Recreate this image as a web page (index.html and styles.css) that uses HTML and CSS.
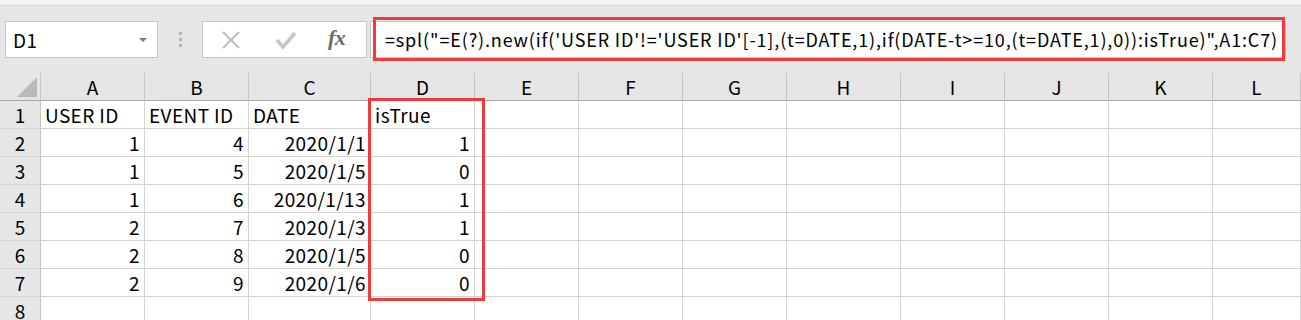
FILE: index.html
```html
<!DOCTYPE html>
<html>
<head>
<meta charset="utf-8">
<link rel="stylesheet" href="styles.css">
</head>
<body>
<div class="app">
  <div class="topstrip"></div>
  <div class="toolbar">
    <div class="namebox"><span>D1</span><span class="caret"></span></div>
    <div class="grip"><i></i><i></i><i></i></div>
    <div class="iconbox">
      <svg class="ico" width="20" height="20" viewBox="0 0 20 20"><path d="M2 2 L18 18 M18 2 L2 18" stroke="#bdbdbd" stroke-width="2" fill="none"/></svg>
      <svg class="ico" width="22" height="20" viewBox="0 0 22 20"><path d="M2 10 L8 17 L20 3" stroke="#c6c6c6" stroke-width="3.6" fill="none"/></svg>
      <span class="fx">fx</span>
    </div>
    <div class="formula">=spl("=E(?).new(if('USER ID'!='USER ID'[-1],(t=DATE,1),if(DATE-t&gt;=10,(t=DATE,1),0)):isTrue)",A1:C7)</div>
    <div class="mark mark-formula"></div>
  </div>
  <div class="sheet">
    <div class="corner"><span class="tri"></span></div>
    <div class="ch">A</div><div class="ch">B</div><div class="ch">C</div><div class="ch">D</div><div class="ch">E</div><div class="ch">F</div><div class="ch">G</div><div class="ch">H</div><div class="ch">I</div><div class="ch">J</div><div class="ch">K</div><div class="ch">L</div>

    <div class="rh">1</div><div class="c">USER ID</div><div class="c">EVENT ID</div><div class="c">DATE</div><div class="c">isTrue</div><div class="c"></div><div class="c"></div><div class="c"></div><div class="c"></div><div class="c"></div><div class="c"></div><div class="c"></div><div class="c"></div>
    <div class="rh">2</div><div class="c n">1</div><div class="c n">4</div><div class="c n">2020/1/1</div><div class="c n">1</div><div class="c"></div><div class="c"></div><div class="c"></div><div class="c"></div><div class="c"></div><div class="c"></div><div class="c"></div><div class="c"></div>
    <div class="rh">3</div><div class="c n">1</div><div class="c n">5</div><div class="c n">2020/1/5</div><div class="c n">0</div><div class="c"></div><div class="c"></div><div class="c"></div><div class="c"></div><div class="c"></div><div class="c"></div><div class="c"></div><div class="c"></div>
    <div class="rh">4</div><div class="c n">1</div><div class="c n">6</div><div class="c n">2020/1/13</div><div class="c n">1</div><div class="c"></div><div class="c"></div><div class="c"></div><div class="c"></div><div class="c"></div><div class="c"></div><div class="c"></div><div class="c"></div>
    <div class="rh">5</div><div class="c n">2</div><div class="c n">7</div><div class="c n">2020/1/3</div><div class="c n">1</div><div class="c"></div><div class="c"></div><div class="c"></div><div class="c"></div><div class="c"></div><div class="c"></div><div class="c"></div><div class="c"></div>
    <div class="rh">6</div><div class="c n">2</div><div class="c n">8</div><div class="c n">2020/1/5</div><div class="c n">0</div><div class="c"></div><div class="c"></div><div class="c"></div><div class="c"></div><div class="c"></div><div class="c"></div><div class="c"></div><div class="c"></div>
    <div class="rh">7</div><div class="c n">2</div><div class="c n">9</div><div class="c n">2020/1/6</div><div class="c n">0</div><div class="c"></div><div class="c"></div><div class="c"></div><div class="c"></div><div class="c"></div><div class="c"></div><div class="c"></div><div class="c"></div>
    <div class="rh">8</div><div class="c"></div><div class="c"></div><div class="c"></div><div class="c"></div><div class="c"></div><div class="c"></div><div class="c"></div><div class="c"></div><div class="c"></div><div class="c"></div><div class="c"></div><div class="c"></div>

    <div class="mark mark-col"></div>
  </div>
</div>
</body>
</html>
```
FILE: styles.css
```css
* { box-sizing: border-box; }
html, body { margin: 0; padding: 0; background: #fff; }
body {
  width: 1301px;
  height: 320px;
  overflow: hidden;
  font-family: "Noto Sans CJK SC", "Noto Sans", sans-serif;
  color: #000;
}
.app { width: 1301px; }

.topstrip {
  height: 6px;
  background: #f3f3f3;
  border-bottom: 1px solid #d6d6d6;
}

.toolbar {
  position: relative;
  height: 67px;
  background: #e6e6e6;
  display: flex;
  align-items: flex-start;
  padding: 15px 0 0 5px;
}

.namebox {
  width: 153px;
  height: 37px;
  background: #fff;
  border: 1px solid #c6c6c6;
  display: flex;
  align-items: center;
  justify-content: space-between;
  padding: 0 10px 0 7px;
  font-size: 19px;
  line-height: 35px;
  letter-spacing: 0.4px;
}
.caret {
  width: 0; height: 0;
  border-left: 4px solid transparent;
  border-right: 4px solid transparent;
  border-top: 4px solid #7a7a7a;
  margin-top: 1px;
}

.grip {
  width: 44px;
  height: 37px;
  display: flex;
  flex-direction: column;
  align-items: center;
  justify-content: center;
  gap: 3px;
}
.grip i {
  display: block;
  width: 3px;
  height: 3px;
  background: #b4b4b4;
}

.iconbox {
  width: 165px;
  height: 37px;
  background: #fff;
  border: 1px solid #c6c6c6;
  display: flex;
  align-items: center;
  padding-left: 18px;
  gap: 34px;
}
.ico { display: block; flex: none; }
.fx {
  font-family: "Liberation Serif", "DejaVu Serif", serif;
  font-style: italic;
  font-weight: bold;
  font-size: 22px;
  color: #6a6a6a;
  margin-left: -3px;
  letter-spacing: -0.5px;
  line-height: 20px;
  margin-top: -3px;
}

.formula {
  margin-left: 3px;
  width: 916px;
  height: 37px;
  background: #fff;
  border: 1px solid #c6c6c6;
  font-size: 18px;
  letter-spacing: 0.85px;
  line-height: 35px;
  padding-left: 14px;
  white-space: nowrap;
  overflow: hidden;
}

.mark {
  position: absolute;
  border: 3px solid #f03a3c;
  pointer-events: none;
}
.mark-formula {
  left: 373px;
  top: 11px;
  width: 912px;
  height: 44px;
}

.sheet {
  position: relative;
  display: grid;
  grid-template-columns: 41px 104px 104px 122px 104px 104px 104px 104px 114px 104px 104px 104px 1fr;
  grid-auto-rows: 28px;
}
.corner {
  background: #e6e6e6;
  border-right: 1px solid #c4c4c4;
  border-bottom: 1px solid #a8a8a8;
  position: relative;
}
.tri {
  position: absolute;
  right: 3px;
  bottom: 3px;
  width: 0; height: 0;
  border-left: 20px solid transparent;
  border-bottom: 20px solid #b9b9b9;
}
.ch {
  background: #e6e6e6;
  border-right: 1px solid #c4c4c4;
  border-bottom: 1px solid #a8a8a8;
  text-align: center;
  font-size: 19px;
  line-height: 27px;
}
.rh {
  background: #e6e6e6;
  border-right: 1px solid #c4c4c4;
  border-bottom: 1px solid #d2d2d2;
  text-align: center;
  font-size: 19px;
  line-height: 27px;
}
.c {
  border-right: 1px solid #d4d4d4;
  border-bottom: 1px solid #d4d4d4;
  font-size: 19px;
  line-height: 27px;
  letter-spacing: 0.4px;
  padding: 0 4px;
  white-space: nowrap;
  overflow: hidden;
}
.c.n { text-align: right; padding-right: 4px; }

.mark-col {
  left: 368px;
  top: 25px;
  width: 117px;
  height: 203px;
}
```
